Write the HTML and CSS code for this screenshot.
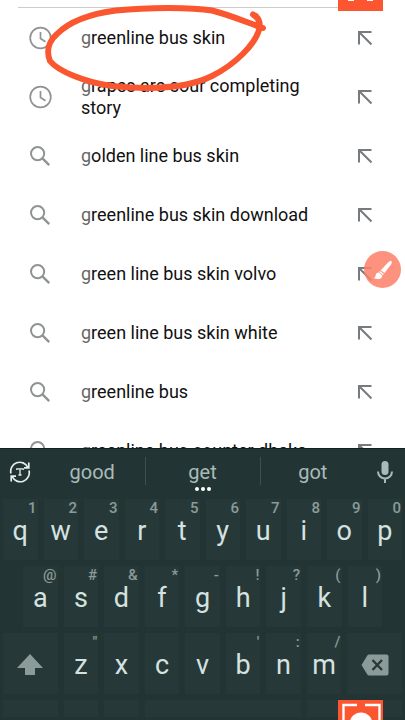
FILE: index.html
```html
<!DOCTYPE html>
<html lang="en">
<head>
  <meta charset="UTF-8">
  <meta name="viewport" content="width=device-width, initial-scale=1.0">
  <title>Search suggestions</title>
  <link rel="stylesheet" href="styles.css">
</head>
<body>
  <svg class="defs" width="0" height="0" aria-hidden="true">
    <symbol id="clock" viewBox="0 0 24 24">
      <circle cx="12.500" cy="12" r="10.300" fill="none" stroke="currentColor" stroke-width="1.700"/>
      <path d="M12.500 6v6.500l5 3.200" fill="none" stroke="currentColor" stroke-width="1.700"/>
    </symbol>
    <symbol id="search" viewBox="0 0 24 24">
      <circle cx="9.600" cy="9.600" r="6.600" fill="none" stroke="currentColor" stroke-width="2"/>
      <path d="M14.200 14.200l7 7" fill="none" stroke="currentColor" stroke-width="2.400"/>
    </symbol>
    <symbol id="arrow" viewBox="0 0 16 16">
      <path d="M2 14.500V2H14.500M2.500 2.500L14.500 14.500" fill="none" stroke="currentColor" stroke-width="2"/>
    </symbol>
  </svg>

  <main class="results">
    <ul class="list">
      <li class="row">
        <svg class="icon"><use href="#clock"/></svg>
        <a href="#"><span>g</span>reenline bus skin</a>
        <button class="fill" aria-label="Use suggestion"><svg><use href="#arrow"/></svg></button>
      </li>
      <li class="row">
        <svg class="icon"><use href="#clock"/></svg>
        <a href="#"><span>g</span>rapes are sour completing story</a>
        <button class="fill" aria-label="Use suggestion"><svg><use href="#arrow"/></svg></button>
      </li>
      <li class="row">
        <svg class="icon"><use href="#search"/></svg>
        <a href="#"><span>g</span>olden line bus skin</a>
        <button class="fill" aria-label="Use suggestion"><svg><use href="#arrow"/></svg></button>
      </li>
      <li class="row">
        <svg class="icon"><use href="#search"/></svg>
        <a href="#"><span>g</span>reenline bus skin download</a>
        <button class="fill" aria-label="Use suggestion"><svg><use href="#arrow"/></svg></button>
      </li>
      <li class="row">
        <svg class="icon"><use href="#search"/></svg>
        <a href="#"><span>g</span>reen line bus skin volvo</a>
        <button class="fill" aria-label="Use suggestion"><svg><use href="#arrow"/></svg></button>
      </li>
      <li class="row">
        <svg class="icon"><use href="#search"/></svg>
        <a href="#"><span>g</span>reen line bus skin white</a>
        <button class="fill" aria-label="Use suggestion"><svg><use href="#arrow"/></svg></button>
      </li>
      <li class="row">
        <svg class="icon"><use href="#search"/></svg>
        <a href="#"><span>g</span>reenline bus</a>
        <button class="fill" aria-label="Use suggestion"><svg><use href="#arrow"/></svg></button>
      </li>
      <li class="row">
        <svg class="icon"><use href="#search"/></svg>
        <a href="#"><span>g</span>reenline bus counter dhaka</a>
        <button class="fill" aria-label="Use suggestion"><svg><use href="#arrow"/></svg></button>
      </li>
    </ul>
  </main>

  <section class="keyboard">
    <div class="strip">
      <button aria-label="Text tools">
        <svg width="22" height="22" viewBox="0 0 22 22" fill="none" stroke="#e4eeec" stroke-width="1.700">
          <path d="M2 12.500A9 9 0 0 1 18.800 6.300M19.800 1.500V6.800H15M20 9.500A9 9 0 0 1 3.200 15.700M2.200 20.500V15.200H7"/>
          <path d="M7.800 9V7.800H14.200V9M11 8V14M9.500 14H12.500" stroke-width="1.300"/>
        </svg>
      </button>
      <button class="word">good</button>
      <button class="word middle">get<i class="dots"></i></button>
      <button class="word">got</button>
      <button aria-label="Voice input">
        <svg width="18" height="24" viewBox="0 0 18 24">
          <rect x="5.500" y="1" width="7" height="14" rx="3.500" fill="#a9bab8"/>
          <path d="M2 11.500a7 7 0 0 0 14 0M9 18.500V23" fill="none" stroke="#a9bab8" stroke-width="2"/>
        </svg>
      </button>
    </div>

    <div class="keys">
      <button class="key"><sup>1</sup>q</button>
      <button class="key"><sup>2</sup>w</button>
      <button class="key"><sup>3</sup>e</button>
      <button class="key"><sup>4</sup>r</button>
      <button class="key"><sup>5</sup>t</button>
      <button class="key"><sup>6</sup>y</button>
      <button class="key"><sup>7</sup>u</button>
      <button class="key"><sup>8</sup>i</button>
      <button class="key"><sup>9</sup>o</button>
      <button class="key"><sup>0</sup>p</button>
    </div>
    <div class="keys inset">
      <button class="key"><sup>@</sup>a</button>
      <button class="key"><sup>#</sup>s</button>
      <button class="key"><sup>&amp;</sup>d</button>
      <button class="key"><sup>*</sup>f</button>
      <button class="key"><sup>-</sup>g</button>
      <button class="key"><sup>!</sup>h</button>
      <button class="key"><sup>?</sup>j</button>
      <button class="key"><sup>(</sup>k</button>
      <button class="key"><sup>)</sup>l</button>
    </div>
    <div class="keys">
      <button class="key wide" aria-label="Shift">
        <svg width="28" height="24" viewBox="0 0 28 24"><path d="M14 1L27 15H19V22H9V15H1z" fill="#8b9b99"/></svg>
      </button>
      <button class="key"><sup>"</sup>z</button>
      <button class="key">x</button>
      <button class="key">c</button>
      <button class="key">v</button>
      <button class="key"><sup>'</sup>b</button>
      <button class="key"><sup>:</sup>n</button>
      <button class="key"><sup>/</sup>m</button>
      <button class="key wide" aria-label="Backspace">
        <svg width="28" height="22" viewBox="0 0 28 22">
          <path d="M8 .5H25.500Q27.500 .5 27.500 2.500V19.500Q27.500 21.500 25.500 21.500H8Q7 21.500 6.300 20.500L.5 11L6.300 1.500Q7 .5 8 .5z" fill="#8b9b99"/>
          <path d="M11.500 6L21 16M21 6L11.500 16" stroke="#263938" stroke-width="2.400"/>
        </svg>
      </button>
    </div>
    <div class="keys last">
      <button class="key wide" aria-label="Symbols"></button>
      <button class="key" aria-label="Emoji"></button>
      <button class="key" aria-label="Comma"></button>
      <button class="key space" aria-label="Space"></button>
      <button class="key" aria-label="Period"></button>
      <button class="key wide" aria-label="Enter"></button>
    </div>
  </section>

  <!-- screen recorder overlay -->
  <svg class="scribble" width="280" height="100" viewBox="0 0 280 100" aria-hidden="true">
    <path d="M253 14.500C258 16 260 21 259 30C255 44 236 64 212 76C188 88 152 90 112 86C84 82 58 71 50 61C46 51 49 41 57 34C69 22 89 14 116 10.500C148 7 192 7 212 10.500C230 15 246 22 263 28M253 14.500C258 17 260 22 260 27"/>
  </svg>
  <svg class="frame top" width="45" height="11" viewBox="0 33 45 11" aria-hidden="true">
    <rect width="45" height="44" fill="#fc5631"/>
    <path d="M10 33.500H16M29 33.500H35" fill="none" stroke="#fff" stroke-width="1"/>
  </svg>
  <button class="brush" aria-label="Draw">
    <svg width="20" height="20" viewBox="0 0 20 20" fill="#fff">
      <path d="M18.500 1Q19.500 2 18 4.500L11.500 13L7.800 10.200L15 2.500Q17.500 .3 18.500 1z"/>
      <path d="M7 11L10.800 14L10 15L6.200 12z"/>
      <path d="M5.800 12.600L9.400 15.400Q9 18.800 5.500 19Q3 19.300 1 18Q2.600 17.300 2.600 15.500Q3 12.700 5.800 12.600z"/>
    </svg>
  </button>
  <svg class="frame bottom" width="45" height="20" viewBox="0 0 45 20" aria-hidden="true">
    <rect width="45" height="45" fill="#fc5631"/>
    <path d="M5.500 20V5H19M27 5H41.500V20" fill="none" stroke="#fff" stroke-width="2.400"/>
    <circle cx="23" cy="24" r="11.500" fill="#fff"/>
  </svg>
</body>
</html>
```
FILE: styles.css
```css
* { box-sizing: border-box; }
body {
  margin: 0;
  height: 100vh;
  display: flex;
  flex-direction: column;
  position: relative;
  overflow: hidden;
  background: #fff;
  font-family: Roboto, sans-serif;
}
button {
  border: 0;
  padding: 0;
  background: none;
  font-family: inherit;
}
svg { display: block; }
.defs { position: absolute; }

/* suggestions */
.results {
  flex: 1;
  min-height: 0;
  overflow: hidden;
  padding-top: 7px;
}
.list {
  list-style: none;
  margin: 0;
  padding: 0;
}
.list::before {
  content: "";
  display: block;
  height: 1px;
  margin: 0 37px 0 18px;
  background: #ccc;
}
.row {
  display: flex;
  align-items: center;
  height: 59px;
  padding: 0 32px 0 28px;
}
.row .icon {
  width: 24px;
  height: 24px;
  margin-right: 29px;
  color: #909394;
}
.row a {
  flex: 1;
  padding-right: 40px;
  color: #111;
  font-size: 18px;
  line-height: 22px;
  text-decoration: none;
}
.row a span { color: #666; }
.fill svg {
  width: 16px;
  height: 16px;
  color: #777b7d;
}

/* keyboard */
.keyboard {
  background: #223534;
  border-top: 1px solid #14201f;
}
.strip {
  display: grid;
  grid-template-columns: 40px 1fr 116px 1fr 40px;
  height: 47px;
}
.strip button {
  display: flex;
  align-items: center;
  justify-content: center;
  padding-bottom: 2px;
}
.strip .word {
  position: relative;
  color: #a9bbb9;
  font-size: 20px;
}
.strip .middle::before,
.strip .middle::after {
  content: "";
  position: absolute;
  top: 8px;
  left: 0;
  width: 1px;
  height: 28px;
  background: #3d504e;
}
.strip .middle::after { left: auto; right: 0; }
.dots {
  position: absolute;
  bottom: 5px;
  width: 4px;
  height: 4px;
  border-radius: 50%;
  background: #fff;
  box-shadow: -6px 0 #fff, 6px 0 #fff;
}
.keys {
  display: flex;
  height: 67px;
}
.inset { padding: 0 20px; }
.last { height: 23px; }
.key {
  flex: 1 1 10%;
  min-width: 0;
  position: relative;
  display: flex;
  align-items: center;
  justify-content: center;
  padding-top: 2px;
  border: 3px solid transparent;
  background: #263938;
  background-clip: padding-box;
  color: #d5e2e0;
  font-size: 27px;
  line-height: 32px;
}
.key sup {
  position: absolute;
  top: 1px;
  right: 1px;
  color: #8b9b99;
  font-size: 15px;
  font-weight: 500;
  line-height: 16px;
}
.wide { flex-basis: 15%; }
.space { flex-basis: 40%; }

/* overlay */
.scribble {
  position: absolute;
  top: 0;
  left: 0;
  fill: none;
  stroke: #fa5630;
  stroke-width: 6;
  stroke-linecap: round;
  stroke-linejoin: round;
}
.frame {
  position: absolute;
  right: 22px;
}
.top { top: 0; }
.bottom { bottom: 0; }
.brush {
  position: absolute;
  top: 251px;
  right: 4px;
  width: 37px;
  height: 37px;
  display: flex;
  align-items: center;
  justify-content: center;
  border-radius: 50%;
  background: rgba(253, 128, 104, 0.85);
}
```
